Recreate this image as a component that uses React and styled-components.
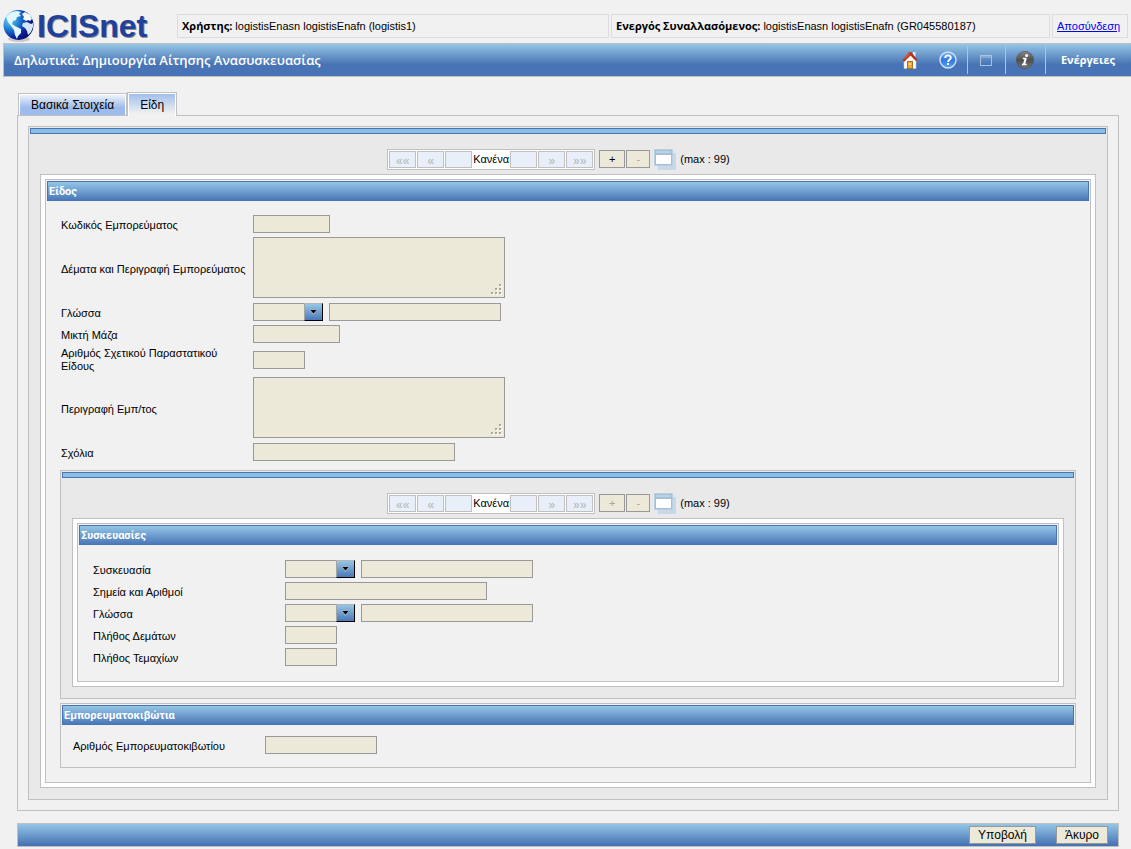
import React, { useId } from 'react';
import styled, { createGlobalStyle } from 'styled-components';

const LINE = '#c0c0c0';
const EDGE = '#4774b5';
const FIELD = '#ece9d8';
const FIELD_LINE = '#999999';
const BAR = 'linear-gradient(#94c6e6, #4b78b8)';

const GlobalStyle = createGlobalStyle`
  *, *::before, *::after { box-sizing: border-box; }
  body {
    margin: 0;
    background: #f1f1f1;
    color: #000;
    font: 11px/13px "Liberation Sans", Arial, sans-serif;
  }
  button, input, select, textarea { font: inherit; color: inherit; margin: 0; border-radius: 0; }
`;

const Page = styled.div`
  display: flex;
  flex-direction: column;
`;

/* ---------- top strip ---------- */

const TopStrip = styled.header`
  display: flex;
  align-items: flex-start;
  height: 43px;
  padding: 9px 3px 0;
`;

const Logo = styled.div`
  flex: none;
  width: 174px;
  height: 34px;
  svg { display: block; overflow: visible; }
`;

const InfoBoxes = styled.div`
  flex: 1;
  display: flex;
  gap: 2px;
  padding-top: 5px;
`;

const InfoBox = styled.div`
  flex: ${(p) => p.$flex || '0 0 76px'};
  height: 24px;
  padding: 5px 4px;
  border: 1px solid #dcdcdc;
  white-space: nowrap;
  b { font-family: "Open Sans", "Noto Sans", sans-serif; line-height: 12px; }
  a { color: #0000ee; }
`;

/* ---------- title bar ---------- */

const TitleBar = styled.div`
  display: flex;
  align-items: center;
  height: 34px;
  margin-left: 3px;
  padding: 0 16px 0 10px;
  border: 1px solid ${LINE};
  border-right: 0;
  background: linear-gradient(#94c6e6, #4873b4 64%, #4873b4);
  color: #fff;
`;

const Title = styled.h1`
  flex: 1;
  margin: 0;
  font: 600 13px/18px "Open Sans", "Noto Sans", sans-serif;
`;

const Tools = styled.div`
  display: flex;
  align-items: center;
  height: 28px;
`;

const ToolButton = styled.button`
  display: flex;
  align-items: center;
  justify-content: center;
  width: ${(p) => p.$width || 38}px;
  height: 28px;
  padding: 0;
  border: 0;
  border-left: ${(p) => (p.$split ? '1px solid #a9c4ea' : '0')};
  background: none;
`;

const ActionsButton = styled.button`
  height: 28px;
  padding: 0 0 0 15px;
  border: 0;
  border-left: 1px solid #a9c4ea;
  background: none;
  color: #fff;
  font: bold 11px/18px "Open Sans", "Noto Sans", sans-serif;
`;

/* ---------- tabs ---------- */

const Main = styled.main`
  padding: 15px 12px 0 17px;
`;

const Tabs = styled.div`
  display: flex;
  align-items: flex-end;
  height: 24px;
  padding-left: 1px;
  margin-bottom: -1px;
`;

const Tab = styled.button`
  position: relative;
  height: ${(p) => (p.$active ? 24 : 23)}px;
  padding: 0 12px;
  border: 1px solid ${LINE};
  border-bottom: ${(p) => (p.$active ? '0' : `1px solid ${LINE}`)};
  box-shadow: inset 1px 1px 0 #fff, inset -1px 0 0 #fff;
  background: ${(p) =>
    p.$active ? 'linear-gradient(#9dbcec, #f1f1f1 90%)' : 'linear-gradient(#f4f7fc, #9dbbeb 65%)'};
  font-size: 12px;
  line-height: 14px;
`;

const TabPanel = styled.section`
  padding: 10px;
  border: 1px solid ${LINE};
`;

/* ---------- repeating groups ---------- */

const Group = styled.section`
  padding: 1px 1px 11px;
  border: 1px solid ${LINE};
  background: #e9e9e9;
`;

const Strip = styled.div`
  height: 6px;
  border: 1px solid ${EDGE};
  background: #8cbde2;
`;

const PagerRow = styled.div`
  display: flex;
  align-items: center;
  justify-content: center;
  height: 21px;
  margin: 15px 19px 4px 0;
`;

const PagerBox = styled.div`
  display: flex;
  align-items: center;
  gap: 1px;
  height: 21px;
  padding: 1px;
  border: 1px solid ${LINE};
  background: #fff;
`;

const PagerButton = styled.button`
  width: 27px;
  height: 17px;
  padding: 2px 0 0;
  border: 1px solid ${LINE};
  background: #e8eff8;
  color: #b4b4b4;
  font-size: 12px;
  line-height: 12px;
`;

const PagerText = styled.span`
  width: 36px;
  text-align: center;
  white-space: nowrap;
`;

const SmallButton = styled.button`
  width: ${(p) => p.$width}px;
  height: 18px;
  margin: 0 0 1px ${(p) => p.$gap}px;
  padding: 0;
  border: 1px solid ${FIELD_LINE};
  background: ${FIELD};
  line-height: 14px;
  &:disabled { color: #aca899; }
`;

const WindowButton = styled.button`
  width: 24px;
  height: 21px;
  margin: 0 3px;
  padding: 0;
  border: 0;
  background: none;
  svg { display: block; }
`;

const Mat = styled.div`
  margin: 0 10px;
  padding: 4px;
  border: 1px solid ${LINE};
  background: #fff;
`;

const Card = styled.section`
  padding: 1px 1px ${(p) => p.$bottom}px;
  border: 1px solid ${LINE};
  background: #f1f1f1;
`;

const CardTitle = styled.h2`
  height: 20px;
  margin: 0;
  padding: 2px 1px 0;
  border: 1px solid ${EDGE};
  background: ${BAR};
  color: #fff;
  font: bold 11px/16px Roboto, "Noto Sans", sans-serif;
`;

const Nested = styled.div`
  display: flex;
  flex-direction: column;
  gap: 4px;
  padding: 9px 13px 0;
`;

/* ---------- form ---------- */

const Form = styled.div`
  display: flex;
  flex-direction: column;
  gap: 4px;
  padding: ${(p) => p.$top}px 14px 0 ${(p) => p.$left}px;
`;

const Row = styled.div`
  display: grid;
  grid-template-columns: 192px 1fr;
  align-items: center;
  min-height: 18px;
`;

const Label = styled.label`
  padding-top: 2px;
  white-space: nowrap;
`;

const TwoLineLabel = styled.label`
  padding-right: 20px;
`;

const Fields = styled.div`
  display: flex;
  gap: 6px;
`;

const Input = styled.input`
  width: ${(p) => p.$width}px;
  height: 18px;
  padding: 0 3px;
  border: 1px solid ${FIELD_LINE};
  background: ${FIELD};
`;

const AreaBox = styled.div`
  position: relative;
  width: 252px;
  height: 61px;
  margin-bottom: 1px;
  svg { position: absolute; right: 3px; bottom: 3px; pointer-events: none; }
`;

const Area = styled.textarea`
  display: block;
  width: 100%;
  height: 100%;
  padding: 2px 3px;
  border: 1px solid ${FIELD_LINE};
  background: ${FIELD};
  resize: none;
`;

const SelectBox = styled.div`
  position: relative;
  width: 70px;
  height: 18px;
`;

const Select = styled.select`
  appearance: none;
  display: block;
  width: 100%;
  height: 18px;
  padding: 0 20px 0 3px;
  border: 1px solid ${FIELD_LINE};
  background: ${FIELD};
`;

const Arrow = styled.span`
  position: absolute;
  top: 0;
  right: 0;
  width: 19px;
  height: 18px;
  border: 1px solid;
  border-color: #b5b5b5 #000 #000 #a5a5a5;
  background: ${BAR};
  pointer-events: none;
  svg { display: block; margin: 4px auto 0; }
`;

/* ---------- footer ---------- */

const Footer = styled.footer`
  display: flex;
  justify-content: flex-end;
  gap: 20px;
  height: 24px;
  margin: 12px 12px 2px 17px;
  padding: 2px 10px;
  border: 1px solid ${LINE};
  background: linear-gradient(#94c6e6, #4470b2);
`;

const FooterButton = styled.button`
  height: 18px;
  padding: 0 8px;
  border: 1px solid ${FIELD_LINE};
  background: ${FIELD};
  font-size: 12px;
  line-height: 14px;
`;

/* ---------- drawings ---------- */

const LogoArt = () => (
  <svg width="160" height="40" viewBox="0 0 160 40" role="img" aria-label="ICISnet">
    <defs>
      <radialGradient id="sea" cx="0.2" cy="0.3" r="0.85">
        <stop offset="0" stopColor="#6fd2f8" />
        <stop offset="0.4" stopColor="#1d7fd0" />
        <stop offset="0.75" stopColor="#0a1f9c" />
        <stop offset="1" stopColor="#060a5c" />
      </radialGradient>
    </defs>
    <ellipse cx="16" cy="30" rx="11" ry="3" fill="#c8c8cc" />
    <circle cx="15.500" cy="16" r="15" fill="url(#sea)" />
    <path d="M3 8 Q7 2 14 2 L18 3 L16 5 L18 7 L14 8 L13 11 L10 12 L9 15 L12 17 L14 18 L18 20 L18 24 L15 27 L14 30 L12 26 L11 21 L8 17 L5 13 Z" fill="#e2f6fe" />
    <path d="M19 5 L22 3 L27 6 L29 10 L27 12 L25 11 L23 12 L20 10 L21 8 Z" fill="#f4fbff" />
    <path d="M20 14 L24 13 L28 15 L30 14 L30 18 L28 23 L25 26 L24 22 L22 19 L19 17 Z" fill="#d5e6fa" />
    <g fontFamily="Liberation Sans, Arial, sans-serif" fontWeight="bold" fontSize="32">
      <text x="35" y="29" fill="#8f8f8f">ICISnet</text>
      <text x="34" y="28" fill="#1f419b">ICISnet</text>
    </g>
  </svg>
);

const HomeIcon = () => (
  <svg width="16" height="18" viewBox="0 0 16 18" aria-hidden="true">
    <path d="M2 9 L8 3 L14 9 V17.500 H2 Z" fill="#fdfdfd" stroke="#b9c4d6" strokeWidth="0.600" />
    <path d="M11 1 H13.500 V6 L11 4 Z" fill="#e8e8ee" />
    <path d="M0.500 9.500 L7 1 L9 1 L15.500 9 L14 10 L8.500 4.500 L2.500 10.500 Z" fill="#b92b12" />
    <path d="M2 8 L7 1.500 L8.500 2.500 L3.500 8 Z" fill="#e2583b" />
    <rect x="5.500" y="10.500" width="5" height="7" fill="#f0a63a" stroke="#a9711c" />
    <path d="M7 12 H9 V14 H7 Z" fill="#ffd98a" />
  </svg>
);

const HelpIcon = () => (
  <svg width="18" height="18" viewBox="0 0 18 18" aria-hidden="true">
    <defs>
      <linearGradient id="help" x1="0" y1="0" x2="0" y2="1">
        <stop offset="0" stopColor="#82b4f6" />
        <stop offset="0.500" stopColor="#3178e0" />
        <stop offset="1" stopColor="#5aa5f8" />
      </linearGradient>
    </defs>
    <circle cx="9" cy="9" r="8" fill="url(#help)" stroke="#cfe1fb" strokeWidth="1.400" />
    <path d="M6.200 7 C6.200 3.600 11.800 3.600 11.800 6.800 C11.800 8.800 9 8.700 9 11" fill="none" stroke="#fff" strokeWidth="1.900" />
    <rect x="8" y="12" width="2" height="2" fill="#fff" />
  </svg>
);

const FrameIcon = () => (
  <svg width="12" height="11" viewBox="0 0 12 11" aria-hidden="true">
    <rect x="0.500" y="0.500" width="11" height="10" fill="none" stroke="#a9c2de" />
    <path d="M1 2 H11" stroke="#a9c2de" />
  </svg>
);

const InfoIcon = () => (
  <svg width="18" height="18" viewBox="0 0 18 18" aria-hidden="true">
    <defs>
      <linearGradient id="info" x1="0" y1="0" x2="0" y2="1">
        <stop offset="0" stopColor="#8a8a8a" />
        <stop offset="0.500" stopColor="#4e4e4e" />
        <stop offset="1" stopColor="#777" />
      </linearGradient>
    </defs>
    <circle cx="9" cy="9" r="8.500" fill="url(#info)" stroke="#555" strokeWidth="0.800" />
    <circle cx="10.600" cy="4.600" r="1.500" fill="#fff" />
    <path d="M6.800 7.500 H10.300 M6 13.500 H10.600" fill="none" stroke="#fff" strokeWidth="1.300" />
    <path d="M9.700 7.500 L8 13.500" stroke="#fff" strokeWidth="2.200" />
  </svg>
);

const WindowsIcon = () => (
  <svg width="24" height="21" viewBox="0 0 24 21" aria-hidden="true">
    <rect x="5" y="4" width="18" height="17" fill="#c9d8e6" />
    <rect x="1" y="0" width="19" height="17" fill="#b9cfe2" />
    <rect x="2" y="1" width="17" height="15" fill="#a5bfd6" />
    <rect x="3" y="2" width="15" height="2" fill="#b9d0e6" />
    <rect x="3" y="6" width="15" height="9" fill="#fff" />
  </svg>
);

const GripIcon = () => (
  <svg width="11" height="11" viewBox="0 0 11 11" aria-hidden="true">
    {[[8, 0], [4, 4], [8, 4], [0, 8], [4, 8], [8, 8]].map(([x, y]) => (
      <g key={`${x}-${y}`}>
        <rect x={x + 1} y={y + 1} width="2" height="2" fill="#fff" />
        <rect x={x} y={y} width="2" height="2" fill="#aca899" />
      </g>
    ))}
  </svg>
);

const ArrowIcon = () => (
  <svg width="9" height="8" viewBox="0 0 9 8" aria-hidden="true">
    <path d="M0.500 1.500 H8.500 L5 6.500 H4 Z" fill="#a9b3c4" />
    <path d="M1.500 2 H7.500 L4.500 5.500 Z" fill="#000" />
  </svg>
);

/* ---------- composed parts ---------- */

function Pager({ canAdd }) {
  return (
    <PagerRow>
      <PagerBox>
        <PagerButton disabled>««</PagerButton>
        <PagerButton disabled>«</PagerButton>
        <PagerButton disabled aria-label="Τρέχον" />
        <PagerText>Κανένα</PagerText>
        <PagerButton disabled aria-label="Μετάβαση" />
        <PagerButton disabled>»</PagerButton>
        <PagerButton disabled>»»</PagerButton>
      </PagerBox>
      <SmallButton $width={26} $gap={4} disabled={!canAdd}>+</SmallButton>
      <SmallButton $width={24} $gap={1} disabled>-</SmallButton>
      <WindowButton aria-label="Λίστα"><WindowsIcon /></WindowButton>
      <span>(max : 99)</span>
    </PagerRow>
  );
}

function TextRow({ label, width, twoLine }) {
  const id = useId();
  const Caption = twoLine ? TwoLineLabel : Label;
  return (
    <Row>
      <Caption htmlFor={id}>{label}</Caption>
      <Input id={id} type="text" $width={width} />
    </Row>
  );
}

function AreaRow({ label }) {
  const id = useId();
  return (
    <Row>
      <Label htmlFor={id}>{label}</Label>
      <AreaBox>
        <Area id={id} />
        <GripIcon />
      </AreaBox>
    </Row>
  );
}

function CodeRow({ label }) {
  const id = useId();
  return (
    <Row>
      <Label htmlFor={id}>{label}</Label>
      <Fields>
        <SelectBox>
          <Select id={id}><option value="" /></Select>
          <Arrow><ArrowIcon /></Arrow>
        </SelectBox>
        <Input type="text" aria-label={label} $width={172} />
      </Fields>
    </Row>
  );
}

export default function App() {
  return (
    <Page>
      <GlobalStyle />
      <TopStrip>
        <Logo><LogoArt /></Logo>
        <InfoBoxes>
          <InfoBox $flex="432 1 0"><b>Χρήστης:</b> logistisEnasn logistisEnafn (logistis1)</InfoBox>
          <InfoBox $flex="439 1 0"><b>Ενεργός Συναλλασόμενος:</b> logistisEnasn logistisEnafn (GR045580187)</InfoBox>
          <InfoBox><a href="#logout">Αποσύνδεση</a></InfoBox>
        </InfoBoxes>
      </TopStrip>

      <TitleBar>
        <Title>Δηλωτικά: Δημιουργία Αίτησης Ανασυσκευασίας</Title>
        <Tools>
          <ToolButton aria-label="Αρχική"><HomeIcon /></ToolButton>
          <ToolButton aria-label="Βοήθεια"><HelpIcon /></ToolButton>
          <ToolButton aria-label="Παράθυρο" $split><FrameIcon /></ToolButton>
          <ToolButton aria-label="Πληροφορίες" $split $width={40}><InfoIcon /></ToolButton>
          <ActionsButton>Ενέργειες</ActionsButton>
        </Tools>
      </TitleBar>

      <Main>
        <Tabs role="tablist">
          <Tab role="tab" aria-selected="false">Βασικά Στοιχεία</Tab>
          <Tab role="tab" aria-selected="true" $active>Είδη</Tab>
        </Tabs>
        <TabPanel role="tabpanel">
          <Group>
            <Strip />
            <Pager canAdd />
            <Mat>
              <Card $bottom={14}>
                <CardTitle>Είδος</CardTitle>
                <Form $top={14} $left={14}>
                  <TextRow label="Κωδικός Εμπορεύματος" width={77} />
                  <AreaRow label="Δέματα και Περιγραφή Εμπορεύματος" />
                  <CodeRow label="Γλώσσα" />
                  <TextRow label="Μικτή Μάζα" width={87} />
                  <TextRow label="Αριθμός Σχετικού Παραστατικού Είδους" width={52} twoLine />
                  <AreaRow label="Περιγραφή Εμπ/τος" />
                  <TextRow label="Σχόλια" width={202} />
                </Form>
                <Nested>
                  <Group>
                    <Strip />
                    <Pager />
                    <Mat>
                      <Card $bottom={15}>
                        <CardTitle>Συσκευασίες</CardTitle>
                        <Form $top={15} $left={14}>
                          <CodeRow label="Συσκευασία" />
                          <TextRow label="Σημεία και Αριθμοί" width={202} />
                          <CodeRow label="Γλώσσα" />
                          <TextRow label="Πλήθος Δεμάτων" width={52} />
                          <TextRow label="Πλήθος Τεμαχίων" width={52} />
                        </Form>
                      </Card>
                    </Mat>
                  </Group>
                  <Card $bottom={13}>
                    <CardTitle>Εμπορευματοκιβώτια</CardTitle>
                    <Form $top={11} $left={11}>
                      <TextRow label="Αριθμός Εμπορευματοκιβωτίου" width={112} />
                    </Form>
                  </Card>
                </Nested>
              </Card>
            </Mat>
          </Group>
        </TabPanel>
      </Main>

      <Footer>
        <FooterButton>Υποβολή</FooterButton>
        <FooterButton>Άκυρο</FooterButton>
      </Footer>
    </Page>
  );
}
